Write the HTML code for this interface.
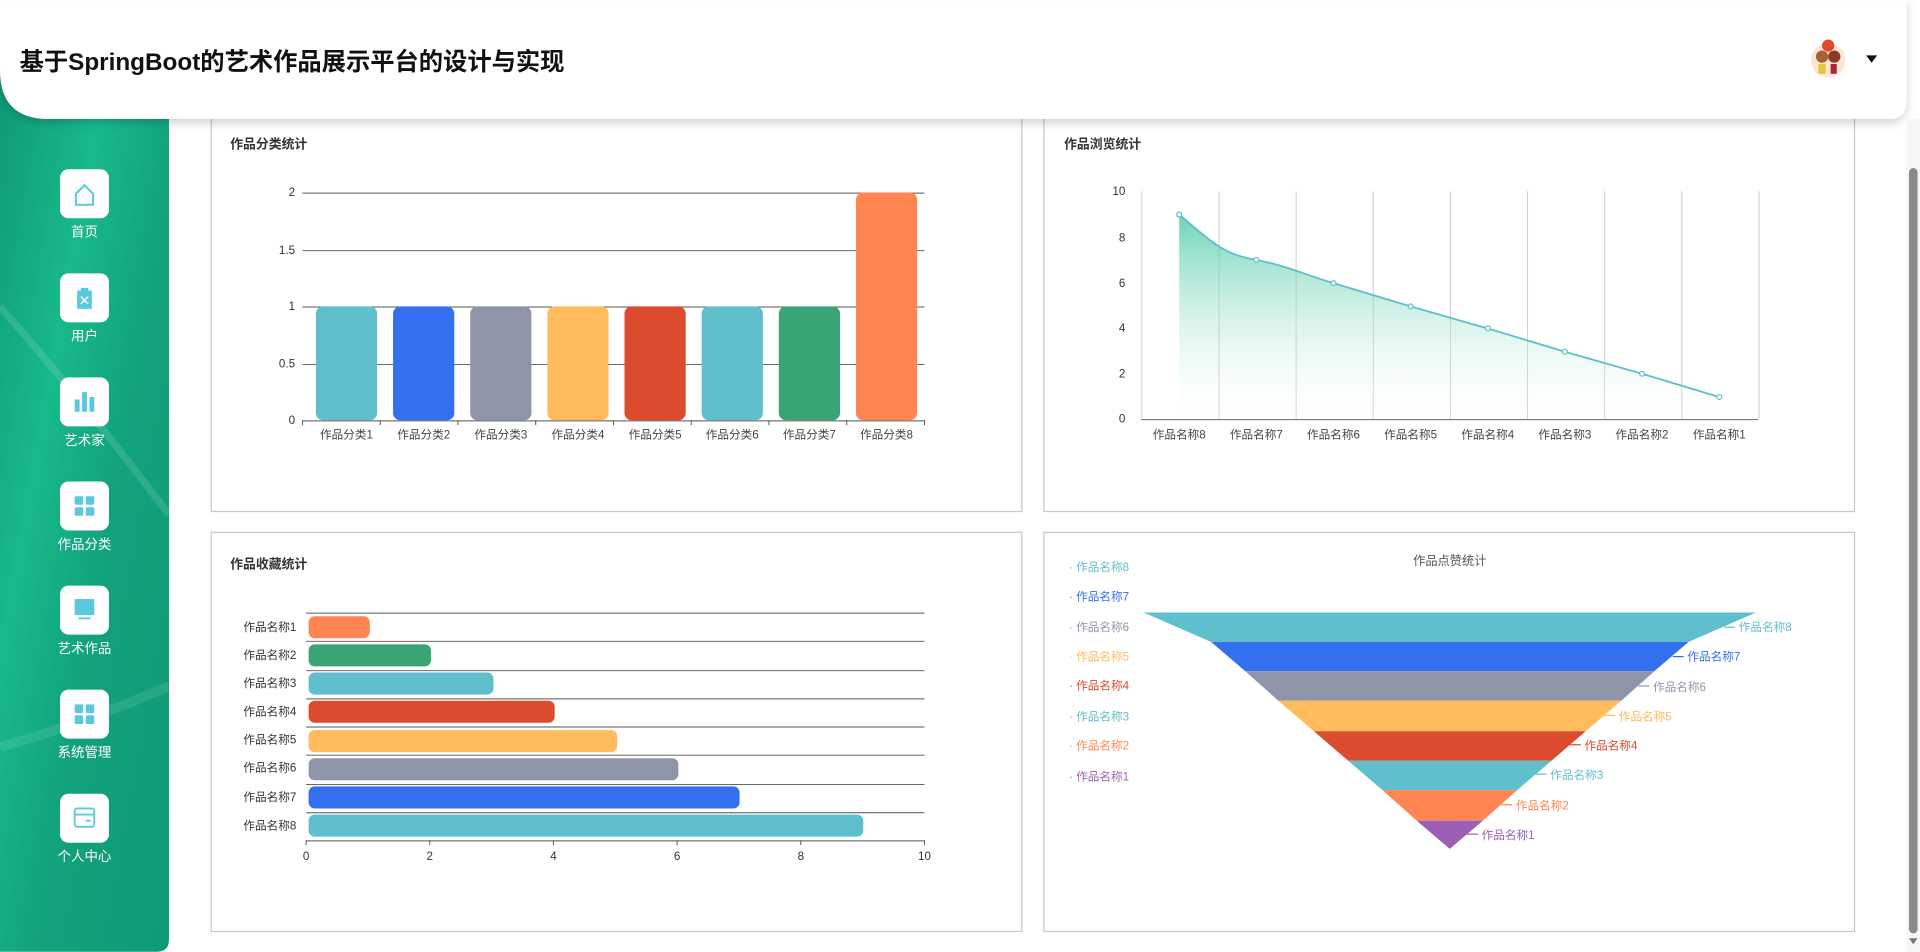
<!DOCTYPE html>
<html><head><meta charset="utf-8"><style>
html,body{margin:0;padding:0;width:1920px;height:952px;overflow:hidden;background:#fff}
svg{display:block}
text{font-family:"Liberation Sans","Noto Sans CJK SC",sans-serif}
</style></head><body>
<svg width="1920" height="952" viewBox="0 0 1568 777" xmlns="http://www.w3.org/2000/svg">
<defs>
<linearGradient id="sb" x1="0" y1="0" x2="1" y2="1">
<stop offset="0" stop-color="#0e9573"/><stop offset="0.35" stop-color="#18b98a"/><stop offset="0.6" stop-color="#12a27c"/><stop offset="1" stop-color="#0f9a77"/></linearGradient>
<linearGradient id="ar" x1="0" y1="0" x2="0" y2="1">
<stop offset="0" stop-color="#3cc59e" stop-opacity="0.75"/><stop offset="1" stop-color="#ffffff" stop-opacity="0.1"/></linearGradient>
<filter id="sh" x="-5%" y="-20%" width="110%" height="150%"><feDropShadow dx="0" dy="3" stdDeviation="4" flood-opacity="0.18"/></filter>
</defs>
<rect width="1568" height="777" fill="#fff"/>
<!-- sidebar -->
<path d="M0 0H138V767Q138 777 128 777H0Z" fill="url(#sb)"/>
<path d="M0 250Q70 330 138 420" stroke="#fff" stroke-opacity="0.12" stroke-width="6" fill="none"/>
<path d="M0 610Q70 590 138 560" stroke="#fff" stroke-opacity="0.1" stroke-width="8" fill="none"/>
<g font-size="11" fill="#fff" text-anchor="middle">
<rect x="49" y="138" width="40" height="40" rx="7" fill="#fff"/>
<path d="M62 158L69 151L76 158V167H62Z" fill="none" stroke="#5bc8dc" stroke-width="1.6"/>
<text x="69" y="193">首页</text>
<rect x="49" y="223" width="40" height="40" rx="7" fill="#fff"/>
<rect x="63" y="237" width="12" height="15" fill="#5bc8dc"/><rect x="66" y="235" width="6" height="3" fill="#5bc8dc"/>
<path d="M66 242L72 248M72 242L66 248" stroke="#fff" stroke-width="1.2"/>
<text x="69" y="278">用户</text>
<rect x="49" y="308" width="40" height="40" rx="7" fill="#fff"/>
<rect x="61" y="326" width="4" height="10" fill="#5bc8dc"/><rect x="67" y="320" width="4" height="16" fill="#5bc8dc"/><rect x="73" y="324" width="4" height="12" fill="#5bc8dc"/>
<text x="69" y="363">艺术家</text>
<rect x="49" y="393" width="40" height="40" rx="7" fill="#fff"/>
<rect x="61" y="405" width="7" height="7" rx="1" fill="#5bc8dc"/><rect x="70" y="405" width="7" height="7" rx="1" fill="#5bc8dc"/><rect x="61" y="414" width="7" height="7" rx="1" fill="#5bc8dc"/><rect x="70" y="414" width="7" height="7" rx="1" fill="#5bc8dc"/>
<text x="69" y="448">作品分类</text>
<rect x="49" y="478" width="40" height="40" rx="7" fill="#fff"/>
<rect x="61" y="489" width="16" height="13" fill="#5bc8dc"/><rect x="64" y="504" width="10" height="1.5" fill="#5bc8dc"/>
<text x="69" y="533">艺术作品</text>
<rect x="49" y="563" width="40" height="40" rx="7" fill="#fff"/>
<rect x="61" y="575" width="7" height="7" rx="1" fill="#5bc8dc"/><rect x="70" y="575" width="7" height="7" rx="1" fill="#5bc8dc"/><rect x="61" y="584" width="7" height="7" rx="1" fill="#5bc8dc"/><rect x="70" y="584" width="7" height="7" rx="1" fill="#5bc8dc"/>
<text x="69" y="618">系统管理</text>
<rect x="49" y="648" width="40" height="40" rx="7" fill="#fff"/>
<rect x="61" y="660" width="16" height="15" rx="2" fill="none" stroke="#5bc8dc" stroke-width="1.5"/><path d="M61 665H77M70 670H74" stroke="#5bc8dc" stroke-width="1.5"/>
<text x="69" y="703">个人中心</text>
</g>
<!-- cards -->
<g fill="none" stroke="#c8c8c8" stroke-width="1">
<rect x="172.5" y="90.5" width="662" height="327"/>
<rect x="852.5" y="90.5" width="662" height="327"/>
<rect x="172.5" y="434.5" width="662" height="326"/>
<rect x="852.5" y="434.5" width="662" height="326"/>
</g>
<!-- header -->
<rect x="0" y="-5" width="1557" height="40" fill="#fff"/>
<path d="M0 0H1557V82Q1557 97 1542 97H40Q0 97 0 57Z" fill="#fff" filter="url(#sh)"/>
<text x="16" y="57" font-size="20" font-weight="bold" fill="#111" textLength="445" lengthAdjust="spacingAndGlyphs">基于SpringBoot的艺术作品展示平台的设计与实现</text>
<circle cx="1493" cy="49" r="14" fill="#fbe6d6"/>
<circle cx="1493" cy="37" r="5" fill="#e04a2c"/>
<circle cx="1488" cy="46" r="5" fill="#a4622f"/><circle cx="1498" cy="46" r="5" fill="#8b3b2a"/>
<rect x="1485" y="52" width="6" height="8" fill="#e4c53a"/><rect x="1495" y="52" width="5" height="8" fill="#b0233a"/>
<path d="M1524 45H1533L1528.5 51Z" fill="#111"/>
<!-- scrollbar -->
<rect x="1557" y="97" width="11" height="680" fill="#f6f6f6"/>
<rect x="1559" y="137" width="7" height="625" rx="3.5" fill="#8a8a8a"/>
<path d="M1559 766H1566L1562.5 771Z" fill="#777"/>

<g font-size="10" fill="#333">
<!-- chart1 -->
<text x="188" y="121" font-weight="bold" font-size="10.5">作品分类统计</text>
<g stroke="#555" stroke-width="0.8">
<path d="M247 157.5H755M247 204.5H755M247 250.5H755M247 297.5H755M247 343.5H755"/>
<path d="M247 343V347M310.5 343V347M374 343V347M437.5 343V347M501 343V347M564.5 343V347M628 343V347M691.5 343V347M755 343V347"/>
</g>
<g text-anchor="end" font-size="9.5"><text x="241" y="160">2</text><text x="241" y="207">1.5</text><text x="241" y="253">1</text><text x="241" y="300">0.5</text><text x="241" y="346">0</text></g>
<rect x="258" y="250" width="50" height="93" rx="6" fill="#5fbfcc"/>
<rect x="321" y="250" width="50" height="93" rx="6" fill="#3370f0"/>
<rect x="384" y="250" width="50" height="93" rx="6" fill="#8f95a8"/>
<rect x="447" y="250" width="50" height="93" rx="6" fill="#ffbb5c"/>
<rect x="510" y="250" width="50" height="93" rx="6" fill="#dc4b2d"/>
<rect x="573" y="250" width="50" height="93" rx="6" fill="#5fbfcc"/>
<rect x="636" y="250" width="50" height="93" rx="6" fill="#3aa574"/>
<rect x="699" y="157" width="50" height="186" rx="6" fill="#ff8653"/>
<g text-anchor="middle" font-size="9.5" fill="#444"><text x="283" y="358">作品分类1</text><text x="346" y="358">作品分类2</text><text x="409" y="358">作品分类3</text><text x="472" y="358">作品分类4</text><text x="535" y="358">作品分类5</text><text x="598" y="358">作品分类6</text><text x="661" y="358">作品分类7</text><text x="724" y="358">作品分类8</text></g>

<!-- chart2 -->
<text x="869" y="121" font-weight="bold" font-size="10.5">作品浏览统计</text>
<path d="M932.5 156V342M995.5 156V342M1058.5 156V342M1121.5 156V342M1184.5 156V342M1247.5 156V342M1310.5 156V342M1373.5 156V342M1436.5 156V342" stroke="#ccc" stroke-width="0.8"/>
<path d="M932 342.5H1436" stroke="#666" stroke-width="0.8"/>
<g text-anchor="end" font-size="9.5"><text x="919" y="159">10</text><text x="919" y="197">8</text><text x="919" y="234">6</text><text x="919" y="271">4</text><text x="919" y="308">2</text><text x="919" y="345">0</text></g>
<path d="M963 175C990 198 1000 208 1026 212C1055 218 1065 224 1089 231L1152 250L1215 268L1278 287L1341 305L1404 324V342H963Z" fill="url(#ar)"/>
<path d="M963 175C990 198 1000 208 1026 212C1055 218 1065 224 1089 231L1152 250L1215 268L1278 287L1341 305L1404 324" fill="none" stroke="#5fbfcc" stroke-width="1.5"/>
<g fill="#fff" stroke="#5fbfcc" stroke-width="1"><circle cx="963" cy="175" r="2"/><circle cx="1026" cy="212" r="2"/><circle cx="1089" cy="231" r="2"/><circle cx="1152" cy="250" r="2"/><circle cx="1215" cy="268" r="2"/><circle cx="1278" cy="287" r="2"/><circle cx="1341" cy="305" r="2"/><circle cx="1404" cy="324" r="2"/></g>
<g text-anchor="middle" font-size="9.5" fill="#444"><text x="963" y="358">作品名称8</text><text x="1026" y="358">作品名称7</text><text x="1089" y="358">作品名称6</text><text x="1152" y="358">作品名称5</text><text x="1215" y="358">作品名称4</text><text x="1278" y="358">作品名称3</text><text x="1341" y="358">作品名称2</text><text x="1404" y="358">作品名称1</text></g>

<!-- chart3 -->
<text x="188" y="464" font-weight="bold" font-size="10.5">作品收藏统计</text>
<path d="M250 500.5H755M250 523.5H755M250 547.5H755M250 570.5H755M250 593.5H755M250 616.5H755M250 640.5H755M250 663.5H755M250 686.5H755" stroke="#555" stroke-width="0.8"/>
<path d="M250 686V690M351 686V690M452 686V690M553 686V690M654 686V690M755 686V690" stroke="#555" stroke-width="0.8"/>
<rect x="252" y="503" width="50" height="18" rx="5" fill="#ff8653"/>
<rect x="252" y="526" width="100" height="18" rx="5" fill="#3aa574"/>
<rect x="252" y="549" width="151" height="18" rx="5" fill="#5fbfcc"/>
<rect x="252" y="572" width="201" height="18" rx="5" fill="#dc4b2d"/>
<rect x="252" y="596" width="252" height="18" rx="5" fill="#ffbb5c"/>
<rect x="252" y="619" width="302" height="18" rx="5" fill="#8f95a8"/>
<rect x="252" y="642" width="352" height="18" rx="5" fill="#3370f0"/>
<rect x="252" y="665" width="453" height="18" rx="5" fill="#5fbfcc"/>
<g text-anchor="end" font-size="9.5"><text x="242" y="515">作品名称1</text><text x="242" y="538">作品名称2</text><text x="242" y="561">作品名称3</text><text x="242" y="584">作品名称4</text><text x="242" y="607">作品名称5</text><text x="242" y="630">作品名称6</text><text x="242" y="654">作品名称7</text><text x="242" y="677">作品名称8</text></g>
<g text-anchor="middle" font-size="9.5"><text x="250" y="702">0</text><text x="351" y="702">2</text><text x="452" y="702">4</text><text x="553" y="702">6</text><text x="654" y="702">8</text><text x="755" y="702">10</text></g>

<!-- chart4 funnel -->
<text x="1184" y="461" text-anchor="middle" font-size="10" fill="#555">作品点赞统计</text>
<g font-size="9.5">
<text x="873" y="466" fill="#5fbfcc">· 作品名称8</text>
<text x="873" y="490" fill="#3370f0">· 作品名称7</text>
<text x="873" y="515" fill="#8f95a8">· 作品名称6</text>
<text x="873" y="539" fill="#ffbb5c">· 作品名称5</text>
<text x="873" y="563" fill="#dc4b2d">· 作品名称4</text>
<text x="873" y="588" fill="#5fbfcc">· 作品名称3</text>
<text x="873" y="612" fill="#ff8653">· 作品名称2</text>
<text x="873" y="637" fill="#9b5fb5">· 作品名称1</text>
</g>
<path d="M934 500H1434L1379 524H989Z" fill="#5fbfcc"/>
<path d="M989 524H1379L1351 548H1017Z" fill="#3370f0"/>
<path d="M1017 548H1351L1324 572H1044Z" fill="#8f95a8"/>
<path d="M1044 572H1324L1295 597H1073Z" fill="#ffbb5c"/>
<path d="M1073 597H1295L1267 621H1101Z" fill="#dc4b2d"/>
<path d="M1101 621H1267L1239 645H1129Z" fill="#5fbfcc"/>
<path d="M1129 645H1239L1211 670H1157Z" fill="#ff8653"/>
<path d="M1157 670H1211L1184 693Z" fill="#9b5fb5"/>
<g font-size="9.5" stroke-width="1">
<path d="M1408 512H1417" stroke="#5fbfcc"/><text x="1420" y="515" fill="#5fbfcc">作品名称8</text>
<path d="M1366 536H1375" stroke="#3370f0"/><text x="1378" y="539" fill="#3370f0">作品名称7</text>
<path d="M1338 560H1347" stroke="#8f95a8"/><text x="1350" y="564" fill="#8f95a8">作品名称6</text>
<path d="M1310 584H1319" stroke="#ffbb5c"/><text x="1322" y="588" fill="#ffbb5c">作品名称5</text>
<path d="M1282 608H1291" stroke="#dc4b2d"/><text x="1294" y="612" fill="#dc4b2d">作品名称4</text>
<path d="M1254 632H1263" stroke="#5fbfcc"/><text x="1266" y="636" fill="#5fbfcc">作品名称3</text>
<path d="M1226 657H1235" stroke="#ff8653"/><text x="1238" y="661" fill="#ff8653">作品名称2</text>
<path d="M1198 681H1207" stroke="#9b5fb5"/><text x="1210" y="685" fill="#9b5fb5">作品名称1</text>
</g>
</g>
</svg>
</body></html>
